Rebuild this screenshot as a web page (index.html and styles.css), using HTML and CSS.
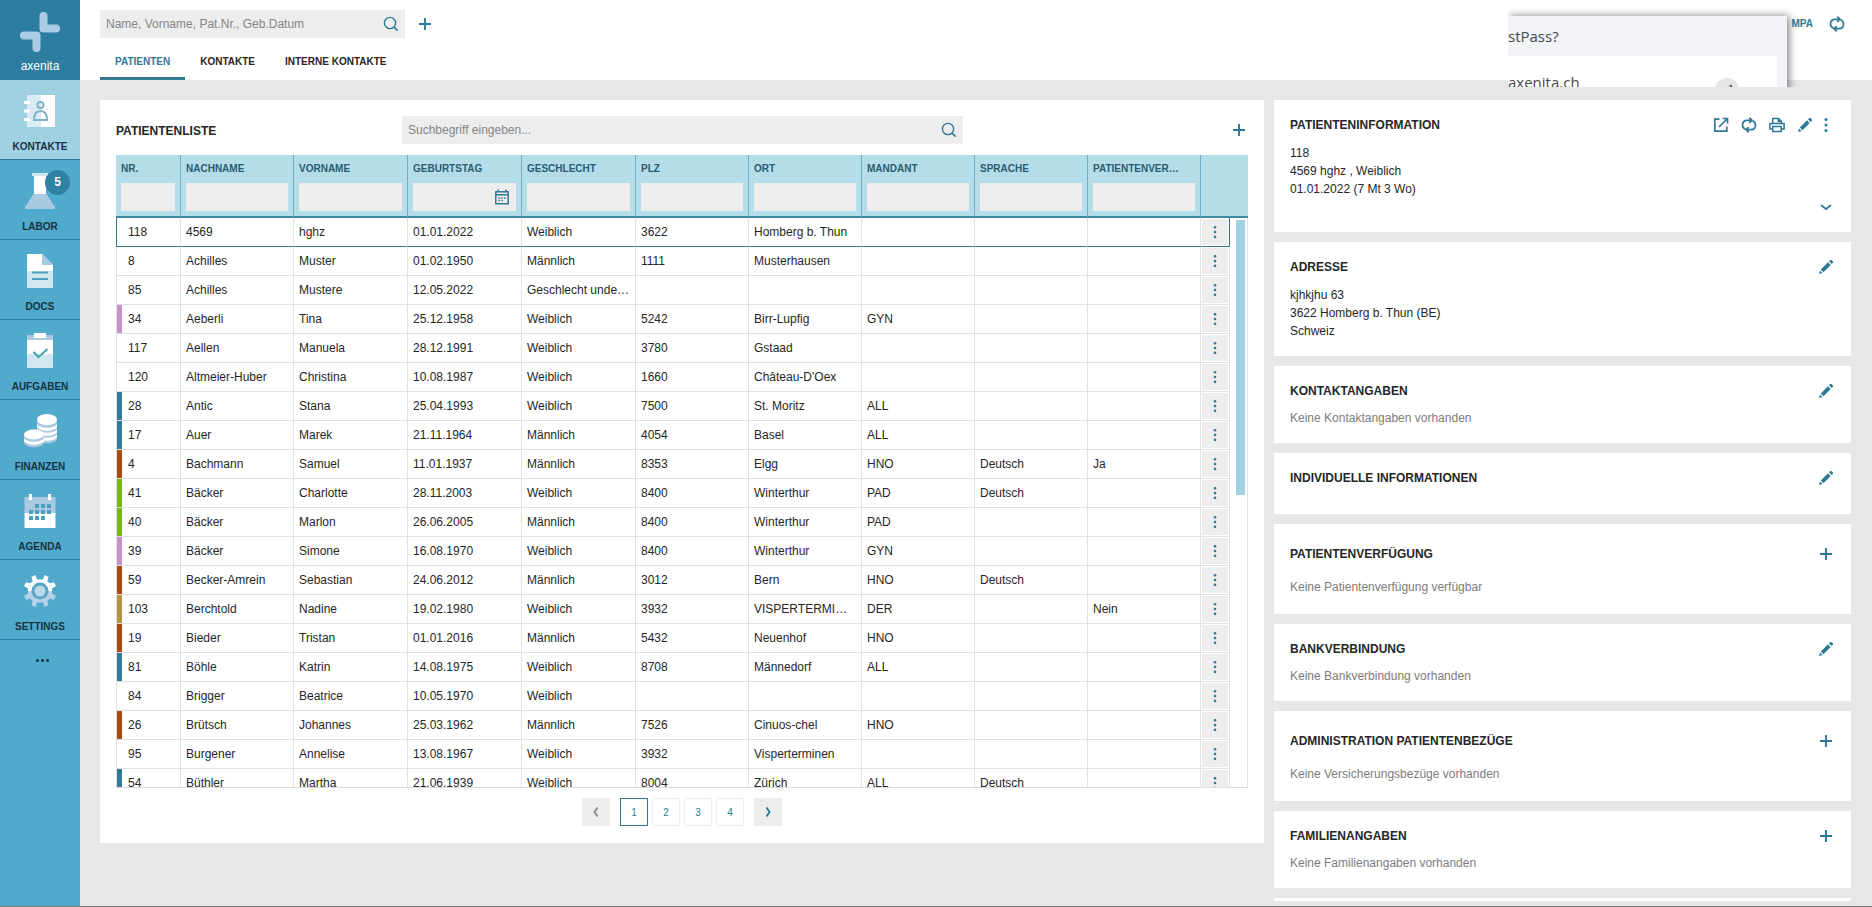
FILE: index.html
```html
<!DOCTYPE html>
<html lang="de">
<head>
<meta charset="utf-8">
<title>axenita – Patientenliste</title>
<link rel="stylesheet" href="styles.css">
</head>
<body>
<svg class="sprite" aria-hidden="true">
  <symbol id="search" viewBox="0 0 16 16"><circle cx="7" cy="7" r="5.6" fill="none" stroke="currentColor" stroke-width="1.4"/><path d="M11 11l3.6 3.6" stroke="currentColor" stroke-width="1.6"/></symbol>
  <symbol id="plus" viewBox="0 0 16 16"><path d="M8 2v12M2 8h12" fill="none" stroke="currentColor" stroke-width="1.9"/></symbol>
  <symbol id="pencil" viewBox="0 0 16 16"><path d="M1 15l1-3.600 2.600 2.600zM2.800 10.500l7.200-7.200 2.700 2.700-7.200 7.200zM11 2.300l1-1c.5-.5 1.200-.5 1.700 0l1 1c.5.5.5 1.200 0 1.700l-1 1z" fill="currentColor"/></symbol>
  <symbol id="dots" viewBox="0 0 16 16"><g fill="currentColor"><circle cx="8" cy="2.500" r="1.500"/><circle cx="8" cy="8" r="1.500"/><circle cx="8" cy="13.500" r="1.500"/></g></symbol>
  <symbol id="sync" viewBox="0 0 16 16"><g fill="none" stroke="currentColor" stroke-width="1.700"><path d="M4.500 12.300C2.500 11.500 1.500 10 1.500 8c0-2.700 1.700-4.700 4.500-4.700h4.500M8.300 .7l2.600 2.600-2.600 2.600"/><path d="M11.500 3.700c2 .8 3 2.300 3 4.300 0 2.700-1.700 4.700-4.500 4.700H5.500M7.700 10.100l-2.600 2.600 2.600 2.600"/></g></symbol>
  <symbol id="external" viewBox="0 0 16 16"><path d="M6.500 2.200H1.800v12h12V9.500M6 10l8-8M9.500 1.500h5v5" fill="none" stroke="currentColor" stroke-width="1.700"/></symbol>
  <symbol id="print" viewBox="0 0 16 16"><g fill="none" stroke="currentColor" stroke-width="1.500"><path d="M3.700 12H.9V6.500h14.200V12h-2.800"/><path d="M3.700 6.500V1.600h5.800l2.800 2.800v2.100M9.300 1.600v3h3"/><path d="M3.700 9.500h8.600v5H3.700z"/></g></symbol>
  <symbol id="cal" viewBox="0 0 16 16"><path d="M1.800 2.700h12.400v12H1.800zM1.800 5.700h12.400M4 .5v3M12 .5v3" fill="none" stroke="currentColor" stroke-width="1.500"/><path d="M4.500 9h1.500M7.300 9h1.500M10 9h1.500M4.500 11.500h1.500M7.300 11.500h1.500" stroke="currentColor" stroke-width="1.300"/></symbol>
  <symbol id="down" viewBox="0 0 16 16"><path d="M3 5l5 4 5-4" fill="none" stroke="currentColor" stroke-width="1.800"/></symbol>
  <symbol id="left" viewBox="0 0 16 16"><path d="M9.500 3.500L6.500 8 9.500 12.500" fill="none" stroke="currentColor" stroke-width="1.900"/></symbol>
  <symbol id="right" viewBox="0 0 16 16"><path d="M6.500 3.500L9.500 8 6.500 12.500" fill="none" stroke="currentColor" stroke-width="1.900"/></symbol>
</svg>

<div class="app">
  <nav class="sidebar">
    <a class="brand" href="#">
      <svg width="42" height="42" viewBox="0 0 42 42" fill="none" stroke="#a9cbe3" stroke-width="8" stroke-linejoin="round" stroke-linecap="round"><path d="M24.500 5v12.500H37M5 24.500h12.500V37"/></svg>
      <span>axenita</span>
    </a>
    <a class="nav-item active" href="#">
      <svg width="36" height="36" viewBox="0 0 36 36"><path d="M5 2h14v32H5z" fill="#d8edf3"/><path d="M19 2h14v32H19z" fill="#fff"/><path d="M2 8h6v3H2zM2 16.500h6v3H2zM2 25h6v3H2z" fill="#fff"/><g fill="none" stroke="#7fb2c9" stroke-width="2"><circle cx="18.500" cy="12" r="3"/><path d="M12 27c0-6 2.500-9 6.500-9s6.500 3 6.500 9z"/></g></svg>
      <span>KONTAKTE</span>
    </a>
    <a class="nav-item" href="#">
      <svg width="36" height="36" viewBox="0 0 36 36"><path d="M12 1h12v20H12z" fill="#fff"/><path d="M10 0h16v3H10z" fill="#d4e6f0"/><path d="M11.500 21h13l8.500 13c.5 1 0 2-1 2H4c-1 0-1.500-1-1-2z" fill="#a9c9e0"/></svg>
      <span>LABOR</span><b class="badge">5</b>
    </a>
    <a class="nav-item" href="#">
      <svg width="36" height="36" viewBox="0 0 36 36"><path d="M5 1h15l11 11v6H5z" fill="#fff"/><path d="M5 18h26v17H5z" fill="#d1e8f1"/><path d="M20 1l11 11H20z" fill="#a9c9e0"/><path d="M10 19.500h16M10 26h16" stroke="#4c9fbd" stroke-width="1.800"/></svg>
      <span>DOCS</span>
    </a>
    <a class="nav-item" href="#">
      <svg width="36" height="36" viewBox="0 0 36 36"><path d="M5 2h26v19H5z" fill="#fff"/><path d="M5 2h26v5H5z" fill="#a9c9e0"/><path d="M12 0h12v5H12z" fill="#fff"/><path d="M5 21h26v14H5z" fill="#d1e8f1"/><path d="M11.500 19l5 5 9-8" fill="none" stroke="#4ba5b7" stroke-width="2.200"/></svg>
      <span>AUFGABEN</span>
    </a>
    <a class="nav-item" href="#">
      <svg width="36" height="36" viewBox="0 0 36 36"><path d="M15 7v18c0 7 20 7 20 0V7z" fill="#a9c9e0"/><g fill="#fff"><path d="M15 11c3 5 17 5 20 0v3c-3 5-17 5-20 0zM15 16c3 5 17 5 20 0v3c-3 5-17 5-20 0zM15 21c3 5 17 5 20 0v3c-3 5-17 5-20 0z"/><ellipse cx="25" cy="6.500" rx="10" ry="5.500"/></g><path d="M2 22v7c0 7 20 7 20 0v-7z" fill="#a9c9e0"/><path d="M2 25c3 5 17 5 20 0v3c-3 5-17 5-20 0z" fill="#fff"/><ellipse cx="12" cy="21.500" rx="10" ry="5" fill="#fff"/></svg>
      <span>FINANZEN</span>
    </a>
    <a class="nav-item" href="#">
      <svg width="36" height="36" viewBox="0 0 36 36"><path d="M2.500 4h31v16h-31z" fill="#a9c9e0"/><path d="M2.500 20h31v15h-31z" fill="#fff"/><path d="M7 1h3v6H7zM26 1h3v6h-3z" fill="#fff"/><path d="M13 11h4v4h-4zM19 11h4v4h-4zM25 11h4v4h-4zM7 17h4v4H7zM13 17h4v4h-4zM19 17h4v4h-4zM25 17h4v4h-4zM7 23h4v4H7zM13 23h4v4h-4zM19 23h4v4h-4z" fill="#4c9fbd"/></svg>
      <span>AGENDA</span>
    </a>
    <a class="nav-item" href="#">
      <svg width="36" height="36" viewBox="0 0 36 36"><defs><linearGradient id="gear" x1="0" y1="0" x2="0" y2="1"><stop offset=".5" stop-color="#fff"/><stop offset=".5" stop-color="#b4d3e8"/></linearGradient></defs><path fill="url(#gear)" d="M15 6.500L13.500 2l-4 1.700L10.700 8 8.500 10.300 4 9.200 2 13l4 2.600v4.800L2 23l2 3.800 4.500-1.100 2.200 2.300-1.200 4.300 4 1.700L15 29.500h6l1.500 4.500 4-1.700-1.200-4.300 2.200-2.300 4.500 1.100 2-3.800-4-2.600v-4.800l4-2.600-2-3.800-4.500 1.100L25.300 8l1.200-4.300-4-1.700L21 6.500z"/><circle cx="18" cy="18" r="7" fill="#b9d8ea" stroke="#5ba3c4" stroke-width="3"/></svg>
      <span>SETTINGS</span>
    </a>
    <button class="nav-more" aria-label="Mehr"><i></i><i></i><i></i></button>
  </nav>

  <div class="page">
    <header class="topbar">
      <div class="top-row">
        <label class="field top-search"><input type="text" aria-label="Patient suchen" placeholder="Name, Vorname, Pat.Nr., Geb.Datum"><svg class="icon"><use href="#search"/></svg></label>
        <button class="icon-btn" aria-label="Neuer Patient"><svg class="icon"><use href="#plus"/></svg></button>
        <div class="account"><a href="#">MPA</a><button class="icon-btn" aria-label="Wechseln"><svg class="icon"><use href="#sync"/></svg></button></div>
      </div>
      <div class="tabs">
        <a class="tab current" href="#">PATIENTEN</a><a class="tab" href="#">KONTAKTE</a><a class="tab" href="#">INTERNE KONTAKTE</a>
      </div>
      <div class="popup-clip">
        <div class="popup">
          <p>stPass?</p>
          <div class="popup-box"><span>axenita.ch</span><button class="popup-edit" aria-label="Bearbeiten"><svg class="icon"><use href="#pencil"/></svg></button></div>
        </div>
      </div>
    </header>

    <main class="content">
      <section class="list-card">
        <div class="list-head">
          <h1>PATIENTENLISTE</h1>
          <label class="field"><input type="text" aria-label="Patientenliste durchsuchen" placeholder="Suchbegriff eingeben..."><svg class="icon"><use href="#search"/></svg></label>
          <button class="icon-btn" aria-label="Patient hinzufügen"><svg class="icon"><use href="#plus"/></svg></button>
        </div>
        <div class="table-wrap">
          <table>
            <colgroup><col class="c-nr"><col><col class="c-wide"><col class="c-wide"><col class="c-wide"><col><col><col><col><col><col class="c-act"><col class="c-gutter"></colgroup>
            <thead><tr>
              <th>NR.<input type="text" aria-label="Nr."></th>
              <th>NACHNAME<input type="text" aria-label="Nachname"></th>
              <th>VORNAME<input type="text" aria-label="Vorname"></th>
              <th class="date">GEBURTSTAG<input type="text" aria-label="Geburtstag"><svg class="icon"><use href="#cal"/></svg></th>
              <th>GESCHLECHT<input type="text" aria-label="Geschlecht"></th>
              <th>PLZ<input type="text" aria-label="PLZ"></th>
              <th>ORT<input type="text" aria-label="Ort"></th>
              <th>MANDANT<input type="text" aria-label="Mandant"></th>
              <th>SPRACHE<input type="text" aria-label="Sprache"></th>
              <th>PATIENTENVER…<input type="text" aria-label="Patientenverfügung"></th>
              <th class="blank" colspan="2"></th>
            </tr></thead>
            <tbody>
              <tr class="selected"><td>118<td>4569<td>hghz<td>01.01.2022<td>Weiblich<td>3622<td>Homberg b. Thun<td><td><td><td><button aria-label="Aktionen"><svg class="icon"><use href="#dots"/></svg></button><td></tr>
              <tr><td>8<td>Achilles<td>Muster<td>01.02.1950<td>Männlich<td>1111<td>Musterhausen<td><td><td><td><button aria-label="Aktionen"><svg class="icon"><use href="#dots"/></svg></button><td></tr>
              <tr><td>85<td>Achilles<td>Mustere<td>12.05.2022<td>Geschlecht unde…<td><td><td><td><td><td><button aria-label="Aktionen"><svg class="icon"><use href="#dots"/></svg></button><td></tr>
              <tr class="gyn"><td>34<td>Aeberli<td>Tina<td>25.12.1958<td>Weiblich<td>5242<td>Birr-Lupfig<td>GYN<td><td><td><button aria-label="Aktionen"><svg class="icon"><use href="#dots"/></svg></button><td></tr>
              <tr><td>117<td>Aellen<td>Manuela<td>28.12.1991<td>Weiblich<td>3780<td>Gstaad<td><td><td><td><button aria-label="Aktionen"><svg class="icon"><use href="#dots"/></svg></button><td></tr>
              <tr><td>120<td>Altmeier-Huber<td>Christina<td>10.08.1987<td>Weiblich<td>1660<td>Château-D'Oex<td><td><td><td><button aria-label="Aktionen"><svg class="icon"><use href="#dots"/></svg></button><td></tr>
              <tr class="all"><td>28<td>Antic<td>Stana<td>25.04.1993<td>Weiblich<td>7500<td>St. Moritz<td>ALL<td><td><td><button aria-label="Aktionen"><svg class="icon"><use href="#dots"/></svg></button><td></tr>
              <tr class="all"><td>17<td>Auer<td>Marek<td>21.11.1964<td>Männlich<td>4054<td>Basel<td>ALL<td><td><td><button aria-label="Aktionen"><svg class="icon"><use href="#dots"/></svg></button><td></tr>
              <tr class="hno"><td>4<td>Bachmann<td>Samuel<td>11.01.1937<td>Männlich<td>8353<td>Elgg<td>HNO<td>Deutsch<td>Ja<td><button aria-label="Aktionen"><svg class="icon"><use href="#dots"/></svg></button><td></tr>
              <tr class="pad"><td>41<td>Bäcker<td>Charlotte<td>28.11.2003<td>Weiblich<td>8400<td>Winterthur<td>PAD<td>Deutsch<td><td><button aria-label="Aktionen"><svg class="icon"><use href="#dots"/></svg></button><td></tr>
              <tr class="pad"><td>40<td>Bäcker<td>Marlon<td>26.06.2005<td>Männlich<td>8400<td>Winterthur<td>PAD<td><td><td><button aria-label="Aktionen"><svg class="icon"><use href="#dots"/></svg></button><td></tr>
              <tr class="gyn"><td>39<td>Bäcker<td>Simone<td>16.08.1970<td>Weiblich<td>8400<td>Winterthur<td>GYN<td><td><td><button aria-label="Aktionen"><svg class="icon"><use href="#dots"/></svg></button><td></tr>
              <tr class="hno"><td>59<td>Becker-Amrein<td>Sebastian<td>24.06.2012<td>Männlich<td>3012<td>Bern<td>HNO<td>Deutsch<td><td><button aria-label="Aktionen"><svg class="icon"><use href="#dots"/></svg></button><td></tr>
              <tr class="der"><td>103<td>Berchtold<td>Nadine<td>19.02.1980<td>Weiblich<td>3932<td>VISPERTERMI…<td>DER<td><td>Nein<td><button aria-label="Aktionen"><svg class="icon"><use href="#dots"/></svg></button><td></tr>
              <tr class="hno"><td>19<td>Bieder<td>Tristan<td>01.01.2016<td>Männlich<td>5432<td>Neuenhof<td>HNO<td><td><td><button aria-label="Aktionen"><svg class="icon"><use href="#dots"/></svg></button><td></tr>
              <tr class="all"><td>81<td>Böhle<td>Katrin<td>14.08.1975<td>Weiblich<td>8708<td>Männedorf<td>ALL<td><td><td><button aria-label="Aktionen"><svg class="icon"><use href="#dots"/></svg></button><td></tr>
              <tr><td>84<td>Brigger<td>Beatrice<td>10.05.1970<td>Weiblich<td><td><td><td><td><td><button aria-label="Aktionen"><svg class="icon"><use href="#dots"/></svg></button><td></tr>
              <tr class="hno"><td>26<td>Brütsch<td>Johannes<td>25.03.1962<td>Männlich<td>7526<td>Cinuos-chel<td>HNO<td><td><td><button aria-label="Aktionen"><svg class="icon"><use href="#dots"/></svg></button><td></tr>
              <tr><td>95<td>Burgener<td>Annelise<td>13.08.1967<td>Weiblich<td>3932<td>Visperterminen<td><td><td><td><button aria-label="Aktionen"><svg class="icon"><use href="#dots"/></svg></button><td></tr>
              <tr class="all"><td>54<td>Büthler<td>Martha<td>21.06.1939<td>Weiblich<td>8004<td>Zürich<td>ALL<td>Deutsch<td><td><button aria-label="Aktionen"><svg class="icon"><use href="#dots"/></svg></button><td></tr>
            </tbody>
          </table>
          <div class="thumb"></div>
        </div>
        <div class="pager">
          <button class="step" disabled aria-label="Zurück"><svg class="icon"><use href="#left"/></svg></button>
          <div class="pages"><button class="on">1</button><button>2</button><button>3</button><button>4</button></div>
          <button class="step" aria-label="Weiter"><svg class="icon"><use href="#right"/></svg></button>
        </div>
      </section>

      <aside class="details">
        <section class="panel">
          <div class="panel-head"><h2>PATIENTENINFORMATION</h2><div class="tools">
            <button class="icon-btn" aria-label="Öffnen"><svg class="icon"><use href="#external"/></svg></button>
            <button class="icon-btn" aria-label="Aktualisieren"><svg class="icon"><use href="#sync"/></svg></button>
            <button class="icon-btn" aria-label="Drucken"><svg class="icon"><use href="#print"/></svg></button>
            <button class="icon-btn" aria-label="Bearbeiten"><svg class="icon"><use href="#pencil"/></svg></button>
            <button class="icon-btn menu" aria-label="Menü"><svg class="icon"><use href="#dots"/></svg></button></div></div>
          <p class="lines">118<br>4569 hghz , Weiblich<br>01.01.2022 (7 Mt 3 Wo)</p>
          <button class="icon-btn expand" aria-label="Mehr anzeigen"><svg class="icon"><use href="#down"/></svg></button>
        </section>
        <section class="panel">
          <div class="panel-head"><h2>ADRESSE</h2><button class="icon-btn" aria-label="Bearbeiten"><svg class="icon"><use href="#pencil"/></svg></button></div>
          <p class="lines">kjhkjhu 63<br>3622 Homberg b. Thun (BE)<br>Schweiz</p>
        </section>
        <section class="panel">
          <div class="panel-head"><h2>KONTAKTANGABEN</h2><button class="icon-btn" aria-label="Bearbeiten"><svg class="icon"><use href="#pencil"/></svg></button></div>
          <p class="note">Keine Kontaktangaben vorhanden</p>
        </section>
        <section class="panel">
          <div class="panel-head empty"><h2>INDIVIDUELLE INFORMATIONEN</h2><button class="icon-btn" aria-label="Bearbeiten"><svg class="icon"><use href="#pencil"/></svg></button></div>
        </section>
        <section class="panel roomy">
          <div class="panel-head"><h2>PATIENTENVERFÜGUNG</h2><button class="icon-btn" aria-label="Hinzufügen"><svg class="icon"><use href="#plus"/></svg></button></div>
          <p class="note">Keine Patientenverfügung verfügbar</p>
        </section>
        <section class="panel">
          <div class="panel-head"><h2>BANKVERBINDUNG</h2><button class="icon-btn" aria-label="Bearbeiten"><svg class="icon"><use href="#pencil"/></svg></button></div>
          <p class="note">Keine Bankverbindung vorhanden</p>
        </section>
        <section class="panel roomy">
          <div class="panel-head"><h2>ADMINISTRATION PATIENTENBEZÜGE</h2><button class="icon-btn" aria-label="Hinzufügen"><svg class="icon"><use href="#plus"/></svg></button></div>
          <p class="note">Keine Versicherungsbezüge vorhanden</p>
        </section>
        <section class="panel">
          <div class="panel-head"><h2>FAMILIENANGABEN</h2><button class="icon-btn" aria-label="Hinzufügen"><svg class="icon"><use href="#plus"/></svg></button></div>
          <p class="note">Keine Familienangaben vorhanden</p>
        </section>
        <section class="panel"></section>
      </aside>
    </main>
  </div>
</div>
</body>
</html>
```
FILE: styles.css
```css
* { box-sizing: border-box; }
body {
  margin: 0;
  font: 12px/18px "Liberation Sans", Arial, sans-serif;
  color: #262626;
  background: #e7e7e7;
}
h1, h2, p { margin: 0; font-size: 12px; line-height: 18px; }
a { color: inherit; text-decoration: none; }
button { padding: 0; border: 0; background: none; font: inherit; color: #2f7896; cursor: pointer; }
input { font: inherit; color: inherit; border: 0; background: #ededed; min-width: 0; border-radius: 0; }
.sprite { position: absolute; width: 0; height: 0; }
.icon { display: block; width: 16px; height: 16px; flex: none; color: #2f7896; }
.icon-btn { display: grid; place-items: center; width: 16px; height: 16px; }

.app { display: flex; height: 100vh; overflow: hidden; border-bottom: 1px solid #7b7b7b; }

/* Sidebar */
.sidebar { width: 80px; flex: none; background: #4faacc; color: #17323f; }
.brand {
  display: flex; flex-direction: column; align-items: center;
  height: 80px; padding-top: 11px;
  background: #2c7d9f; color: #fff; font-size: 12px;
}
.brand span { line-height: 26px; }
.nav-item {
  position: relative;
  display: flex; flex-direction: column; align-items: center; gap: 9px;
  height: 80px; padding-top: 13px;
  border-bottom: 1px solid #2a7fa2;
  font-size: 10px; font-weight: bold;
}
.nav-item.active { background: #9fd1e2; }
.badge {
  position: absolute; left: 45px; top: 10px;
  width: 25px; height: 25px; border-radius: 50%;
  background: #2f81a1; color: #fff; font-size: 12px; line-height: 25px; text-align: center;
}
.nav-more { display: flex; justify-content: center; align-items: center; gap: 2px; width: 100%; height: 40px; padding-left: 4px; }
.nav-more i { width: 3px; height: 3px; border-radius: 50%; background: #17323f; }

/* Top bar */
.page { flex: 1; min-width: 0; display: flex; flex-direction: column; }
.topbar {
  position: relative; flex: none;
  display: flex; flex-direction: column; justify-content: space-between;
  height: 80px; padding: 10px 20px 0; background: #fff;
}
.top-row { display: flex; align-items: center; gap: 12px; }
.field { display: flex; align-items: center; height: 28px; padding-right: 6px; background: #ededed; }
.field input { flex: 1; height: 28px; padding: 0 6px; outline: 0; }
.field input::placeholder { color: #858585; opacity: 1; }
.top-search { width: 305px; }
.account { display: flex; align-items: center; gap: 16px; margin-left: auto; padding-right: 7px; font-size: 10px; font-weight: bold; color: #2f7896; }
.tabs { display: flex; }
.tab { padding: 0 15px; height: 27px; font-size: 10px; font-weight: bold; border-bottom: 3px solid transparent; }
.tab.current { color: #2f7896; border-color: #35778c; }

/* Browser extension popup lying over the top bar */
.popup-clip { position: absolute; right: 73px; top: 8px; width: 291px; height: 79px; overflow: hidden; }
.popup {
  width: 279px; margin-top: 8px; padding-right: 10px; height: 100px;
  background: #f1f3f7; color: #46494d;
  box-shadow: 2px 0 8px rgba(0, 0, 0, .5);
  font: 15px/40px "Open Sans", sans-serif;
}
.popup p { font-size: 15px; line-height: 40px; }
.popup-box { display: flex; justify-content: space-between; align-items: flex-start; padding: 6px 38px 0 0; height: 60px; background: #fff; }
.popup-edit { display: grid; place-items: center; width: 24px; height: 24px; margin-top: 16px; border-radius: 50%; background: #e4e4e4; }
.popup-edit .icon { width: 12px; height: 12px; color: #555; }

/* Content */
.content {
  flex: 1; min-height: 0;
  display: grid; grid-template-columns: minmax(0, 1164fr) minmax(0, 577fr); gap: 10px;
  align-items: start;
  padding: 20px 21px 5px 20px;
}
.list-card { padding: 16px 16px 17px; background: #fff; }
.list-head { display: grid; grid-template-columns: 286px 1fr 285px; align-items: center; padding-bottom: 11px; }
.list-head h1 { padding-top: 2px; }
.list-head .icon-btn { justify-self: end; margin-right: 1px; }
.table-wrap {
  position: relative; overflow: hidden;
  height: calc(100vh - 274px);
  border-bottom: 1px solid #d9dde0;
}
table { width: 100%; table-layout: fixed; border-collapse: separate; border-spacing: 0; }
.c-nr { width: 65px; }
.c-wide { width: 114px; }
.c-act { width: 29px; }
.c-gutter { width: 18px; }
th {
  position: relative; height: 63px; padding: 5px 5px 0; vertical-align: top;
  background: #b5dce9; border-right: 1px solid #69aec8; border-bottom: 2px solid #3f8aa3;
  font-size: 10px; line-height: 18px; text-align: left; color: #295c70;
  overflow: hidden; text-overflow: ellipsis; white-space: nowrap;
}
th.blank { border-right: 0; }
th input { display: block; width: 100%; height: 28px; margin-top: 5px; }
th .icon { position: absolute; right: 11px; bottom: 11px; }
td {
  height: 29px; padding: 0 5px;
  border-right: 1px solid #e0e3e6; border-bottom: 1px solid #dfe2e5;
  overflow: hidden; text-overflow: ellipsis; white-space: nowrap;
}
td:first-child { padding-left: 11px; border-left: 1px solid #e0e3e6; }
td:nth-child(11) { padding: 0; }
td:nth-child(12) { border-bottom: 0; }
td button { display: grid; place-items: center; width: 26px; height: 26px; margin: 0 auto; background: #ededed; }
td .icon { width: 14px; height: 14px; }
.all td:first-child { box-shadow: inset 5px 0 #33799a; }
.gyn td:first-child { box-shadow: inset 5px 0 #ca90cb; }
.hno td:first-child { box-shadow: inset 5px 0 #aa4a10; }
.pad td:first-child { box-shadow: inset 5px 0 #74b71b; }
.der td:first-child { box-shadow: inset 5px 0 #b89243; }
.selected td:not(:last-child) { border-bottom-color: #35778c; }
.selected td:first-child { border-left-color: #35778c; }
.selected td:nth-child(11) { border-right-color: #35778c; }
.thumb { position: absolute; right: 3px; top: 65px; width: 9px; height: 275px; background: #9fd1e2; }

.pager { display: flex; justify-content: center; gap: 10px; padding-top: 10px; font-size: 10px; }
.pager button { display: grid; place-items: center; width: 28px; height: 28px; }
.pages { display: flex; gap: 4px; }
.pages button { padding-top: 1px; border: 1px solid #ededed; }
.pages .on { border-color: #2f7896; }
.pager .step { background: #ededed; }
.step:disabled .icon { color: #8b8b8b; }

/* Detail panels */
.details { display: flex; flex-direction: column; gap: 10px; max-height: 100%; overflow: hidden; }
.panel { flex: none; padding: 16px; background: #fff; }
.panel-head { display: flex; justify-content: space-between; align-items: center; }
.panel-head > .icon-btn { margin-right: 1px; }
.panel-head.empty { padding-bottom: 11px; }
.tools { display: flex; gap: 12px; }
.tools .menu { margin-left: -7px; margin-right: 1px; }
.lines { padding-top: 10px; }
.note { padding-top: 9px; color: #7c7c7c; }
.expand { margin: 2px 1px 0 auto; }
.roomy { padding: 21px 16px 18px; }
.roomy .note { padding-top: 15px; }
```
